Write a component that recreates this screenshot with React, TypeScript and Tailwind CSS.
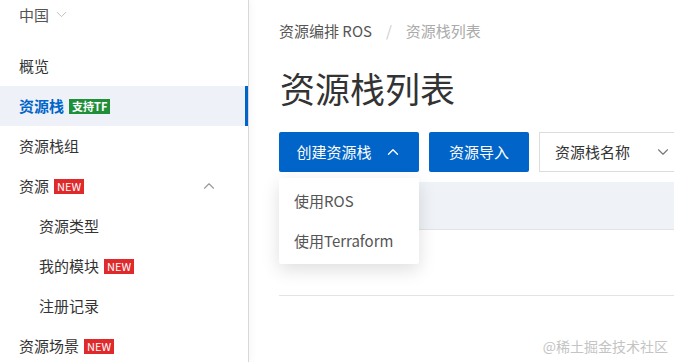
import { ChevronDown, ChevronUp } from 'lucide-react';

const font = { fontFamily: '"Noto Sans CJK SC", "Noto Sans", sans-serif' };

function Badge({ text, green }: { text: string; green?: boolean }) {
  return (
    <span
      className={`ml-[5px] inline-flex h-[15px] items-center px-[3px] text-[11px] leading-none text-white ${
        green ? 'bg-[#1f8f3a] font-bold' : 'bg-[#e0292b]'
      }`}
    >
      {text}
    </span>
  );
}

function NavItem({ label, sub, active, badge, green, open }: {
  label: string; sub?: boolean; active?: boolean; badge?: string; green?: boolean; open?: boolean;
}) {
  return (
    <div
      className={`flex h-10 items-center text-[15px] ${sub ? 'pl-[39px]' : 'pl-[19px]'} pr-[30px] ${
        active ? 'bg-[#eef2f8] text-[#0064c8] font-semibold border-r-[3px] border-[#0064c8]' : 'text-[#333]'
      }`}
    >
      <span>{label}</span>
      {badge && <Badge text={badge} green={green} />}
      {open && <ChevronUp className="ml-auto h-[18px] w-[18px] text-[#999]" strokeWidth={1.5} />}
    </div>
  );
}

export default function App() {
  return (
    <div className="flex h-[362px] w-[674px] overflow-hidden bg-white" style={font}>
      <aside className="relative z-10 w-[249px] shrink-0 border-r border-[#d8d8d8] shadow-[2px_0_8px_rgba(0,0,0,0.04)]">
        <div className="flex h-[46px] items-start pl-[19px] pt-[4px] text-[15px] text-[#555]">
          <span>中国</span>
          <ChevronDown className="ml-[4px] mt-[2px] h-[17px] w-[17px] text-[#bbb]" strokeWidth={1.3} />
        </div>
        <NavItem label="概览" />
        <NavItem label="资源栈" active badge="支持TF" green />
        <NavItem label="资源栈组" />
        <NavItem label="资源" badge="NEW" open />
        <NavItem label="资源类型" sub />
        <NavItem label="我的模块" sub badge="NEW" />
        <NavItem label="注册记录" sub />
        <NavItem label="资源场景" badge="NEW" />
      </aside>

      <main className="relative min-w-0 flex-1 overflow-hidden pl-[30px]">
        <div className="flex h-[64px] items-center gap-[12px] pb-[1px] text-[15px] whitespace-nowrap">
          <span className="text-[#555]">资源编排 ROS</span>
          <span className="px-[2px] text-[#ccc]">/</span>
          <span className="text-[#aaa]">资源栈列表</span>
        </div>
        <h1 className="h-[48px] pl-[1px] text-[35px] leading-[48px] text-[#333]">资源栈列表</h1>

        <div className="mt-[20px] flex h-10 gap-[10px] whitespace-nowrap text-[15px]">
          <button className="flex w-[140px] shrink-0 items-center justify-center gap-[12px] rounded-[2px] bg-[#0064c8] text-white">
            创建资源栈
            <ChevronUp className="h-[18px] w-[18px]" strokeWidth={1.8} />
          </button>
          <button className="w-[100px] shrink-0 rounded-[2px] bg-[#0064c8] text-white">资源导入</button>
          <div className="flex w-[152px] shrink-0 items-center border border-[#dcdcdc] pl-[15px] pr-[18px] text-[#333]">
            资源栈名称
            <ChevronDown className="ml-auto h-[18px] w-[18px] text-[#777]" strokeWidth={1.5} />
          </div>
        </div>

        <div className="mt-[10px] h-[48px] border-b border-[#e3e3e3] bg-[#eff3f8]" />
        <div className="h-[66px] border-b border-[#e3e3e3]" />

        <div className="absolute left-[30px] top-[178px] w-[140px] rounded-[2px] bg-white py-[3px] text-[15px] text-[#555] shadow-[0_6px_18px_rgba(0,0,0,0.13)]">
          <div className="flex h-10 items-center pl-[15px]">使用ROS</div>
          <div className="flex h-10 items-center pl-[15px]">使用Terraform</div>
        </div>

        <div
          className="absolute bottom-[5px] right-[6px] text-[14px] text-[#c4c4c4]"
          style={{ fontFamily: '"Noto Sans CJK SC", serif' }}
        >
          @稀土掘金技术社区
        </div>
      </main>
    </div>
  );
}
